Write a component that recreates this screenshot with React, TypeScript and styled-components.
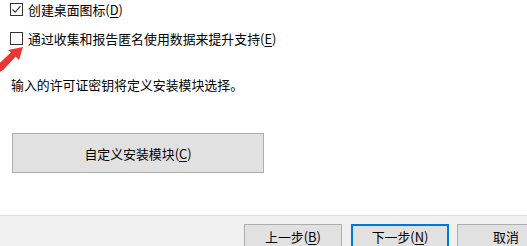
import React from "react";
import styled, { createGlobalStyle } from "styled-components";

const Global = createGlobalStyle`
  html, body { margin: 0; padding: 0; background: #ffffff; }
  body {
    font-family: "Microsoft YaHei UI", "Noto Sans CJK SC", "Noto Sans", sans-serif;
    font-size: 12.9px;
    color: #000000;
    overflow: hidden;
  }
`;

const Page = styled.div`
  width: 527px;
  height: 246px;
  display: flex;
  flex-direction: column;
  position: relative;
  overflow: hidden;
`;

const Content = styled.div`
  height: 215px;
  display: flex;
  flex-direction: column;
  padding: 3px 0 0 10px;
  box-sizing: border-box;
`;

const CheckRow = styled.div<{ $mt?: number }>`
  display: flex;
  align-items: center;
  height: 13px;
  gap: 5px;
  margin-top: ${(p) => p.$mt ?? 0}px;
  white-space: nowrap;
`;

const Box = styled.span`
  width: 13px;
  height: 13px;
  box-sizing: border-box;
  border: 1px solid #333333;
  background: #ffffff;
  display: inline-flex;
  align-items: center;
  justify-content: center;
  flex: none;
`;

const Label = styled.span`
  line-height: 17px;
`;

const Key = styled.span`
  text-decoration: underline;
  text-underline-offset: 2px;
  text-decoration-thickness: 1px;
`;

const Info = styled.div`
  margin-top: 31px;
  padding-left: 1px;
  line-height: 17px;
  white-space: nowrap;
`;

const BigButton = styled.div`
  margin-top: 40px;
  margin-left: 2px;
  width: 252px;
  height: 40px;
  box-sizing: border-box;
  border: 1px solid #adadad;
  background: #e1e1e1;
  display: flex;
  align-items: center;
  justify-content: center;
`;

const Footer = styled.div`
  height: 31px;
  box-sizing: border-box;
  border-top: 1px solid #dfdfdf;
  background: #f0f0f0;
  display: flex;
  align-items: flex-start;
  padding: 8px 0 0 244px;
  gap: 9px;
  overflow: hidden;
`;

const NavButton = styled.div<{ $primary?: boolean; $gap?: number }>`
  width: 98px;
  height: 24px;
  flex: none;
  box-sizing: border-box;
  border: ${(p) => (p.$primary ? "2px solid #0078d7" : "1px solid #adadad")};
  background: #e1e1e1;
  display: flex;
  align-items: center;
  justify-content: center;
  margin-left: ${(p) => p.$gap ?? 0}px;
  white-space: nowrap;
`;

const Arrow = styled.svg`
  position: absolute;
  left: 0;
  top: 44px;
`;

export default function App() {
  return (
    <Page>
      <Global />
      <Content>
        <CheckRow>
          <Box>
            <svg width="11" height="11" viewBox="0 0 11 11">
              <path d="M1.5 5.5 L4.2 8.2 L9.5 2.2" fill="none" stroke="#3c3c3c" strokeWidth="1.2" />
            </svg>
          </Box>
          <Label>
            创建桌面图标(<Key>D</Key>)
          </Label>
        </CheckRow>
        <CheckRow $mt={16}>
          <Box />
          <Label>
            通过收集和报告匿名使用数据来提升支持(<Key>E</Key>)
          </Label>
        </CheckRow>
        <Info>输入的许可证密钥将定义安装模块选择。</Info>
        <BigButton>
          自定义安装模块(<Key>C</Key>)
        </BigButton>
      </Content>
      <Footer>
        <NavButton>
          上一步(<Key>B</Key>)
        </NavButton>
        <NavButton $primary>
          下一步(<Key>N</Key>)
        </NavButton>
        <NavButton $gap={-1}>取消</NavButton>
      </Footer>
      <Arrow width="30" height="32" viewBox="0 0 30 32">
        <polygon points="23,3 19,16 15.5,12.5 3,26 0,23 0,19 11,8.5 8,6" fill="#ef3434" />
        <polygon points="0,19 11,8.5 15.5,12.5 3,26 0,28" fill="#ef3434" />
      </Arrow>
    </Page>
  );
}
